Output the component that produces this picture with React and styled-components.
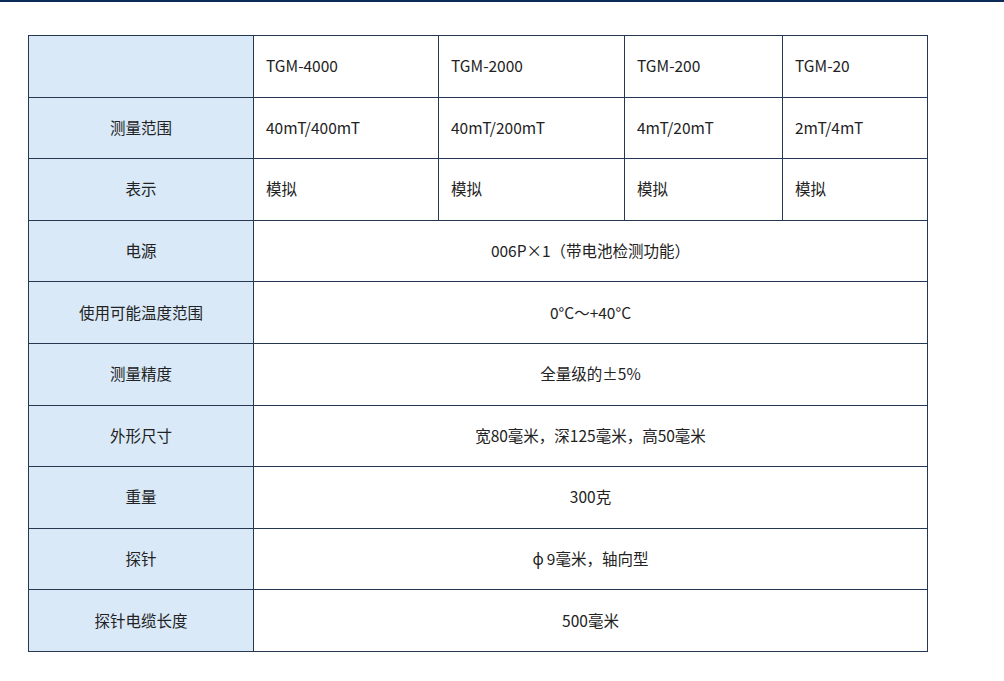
import React from "react";
import styled, { createGlobalStyle } from "styled-components";

const Global = createGlobalStyle`
  html, body { margin: 0; padding: 0; background: #fff; }
  body { font-family: "Noto Sans CJK SC", "Noto Sans", sans-serif; color: #222; }
`;

const Page = styled.div`
  border-top: 2px solid #0b2a57;
  padding: 33px 0 0 28px;
`;

const Table = styled.table`
  border-collapse: collapse;
  table-layout: fixed;
  width: 899px;
  font-size: 15.5px;
  line-height: 20px;
`;

const Row = styled.tr`
  height: 61.6px;
`;

const Cell = styled.td`
  border: 1px solid #263752;
  padding: ${(p) => (p.$center ? "0 0 2px 0" : "0 0 2px 12px")};
  text-align: ${(p) => (p.$center ? "center" : "left")};
  vertical-align: middle;
  color: #222;
`;

const Label = styled.td`
  border: 1px solid #263752;
  background: #d9e9f8;
  text-align: center;
  vertical-align: middle;
  padding: 0 0 2px 0;
  color: #222;
`;

const models = ["TGM-4000", "TGM-2000", "TGM-200", "TGM-20"];
const ranges = ["40mT/400mT", "40mT/200mT", "4mT/20mT", "2mT/4mT"];

const merged = [
  ["电源", "006P×1（带电池检测功能）"],
  ["使用可能温度范围", "0°C～+40°C"],
  ["测量精度", "全量级的±5%"],
  ["外形尺寸", "宽80毫米，深125毫米，高50毫米"],
  ["重量", "300克"],
  ["探针", "ϕ\u20099毫米，轴向型"],
  ["探针电缆长度", "500毫米"],
];

export default function App() {
  return (
    <>
      <Global />
      <Page>
        <Table>
          <colgroup>
            <col style={{ width: 225 }} />
            <col style={{ width: 185 }} />
            <col style={{ width: 186 }} />
            <col style={{ width: 158 }} />
            <col style={{ width: 145 }} />
          </colgroup>
          <tbody>
            <Row>
              <Label />
              {models.map((m) => (
                <Cell key={m}>{m}</Cell>
              ))}
            </Row>
            <Row>
              <Label>测量范围</Label>
              {ranges.map((m) => (
                <Cell key={m}>{m}</Cell>
              ))}
            </Row>
            <Row>
              <Label>表示</Label>
              {models.map((m) => (
                <Cell key={m}>模拟</Cell>
              ))}
            </Row>
            {merged.map(([l, v]) => (
              <Row key={l}>
                <Label>{l}</Label>
                <Cell $center colSpan={4}>
                  {v}
                </Cell>
              </Row>
            ))}
          </tbody>
        </Table>
      </Page>
    </>
  );
}
